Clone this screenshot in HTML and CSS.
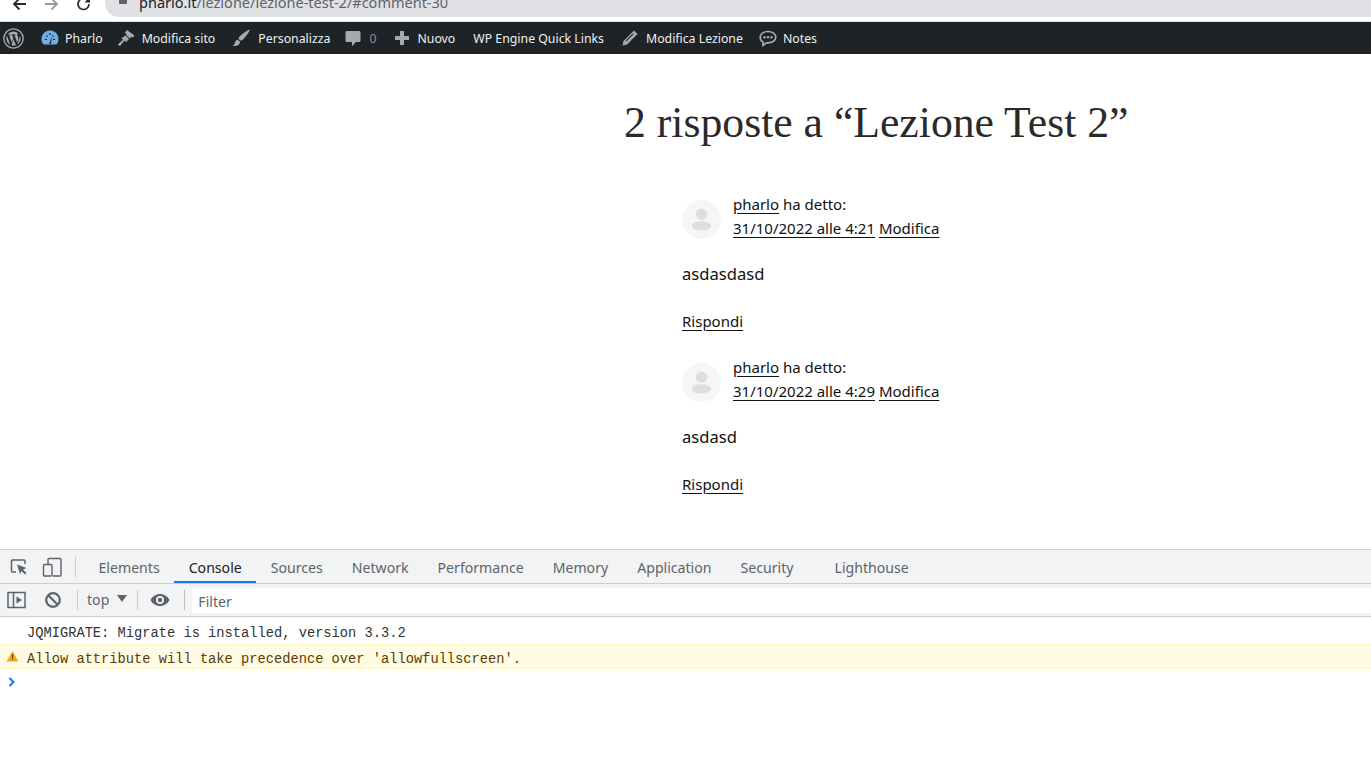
FILE: index.html
```html
<!DOCTYPE html>
<html lang="it">
<head>
<meta charset="utf-8">
<title>Lezione Test 2</title>
<link rel="stylesheet" href="styles.css">
</head>
<body>
<div class="browser">
  <svg class="nav nav-back" viewBox="0 0 16 16"><path d="M15 5H3M8.500-.5 3 5l5.500 5.500" fill="none" stroke="#2b2b2b" stroke-width="1.800"/></svg>
  <svg class="nav nav-fwd" viewBox="0 0 16 16"><path d="M1 5h12M7.500-.5 13 5l-5.500 5.500" fill="none" stroke="#9a9a9a" stroke-width="1.800"/></svg>
  <svg class="nav nav-rel" viewBox="0 0 16 16"><path d="M13 5a5.500 5.500 0 1 1-1.600-3.900" fill="none" stroke="#2b2b2b" stroke-width="1.700"/><path d="M14 -2v5.500H8.500z" fill="#2b2b2b"/></svg>
  <div class="url">
    <svg class="lock" viewBox="0 0 10 10"><rect x="1" y="0" width="8" height="7" rx="1" fill="#5f6368"/></svg>
    <span class="url-text"><span class="host">pharlo.it</span>/lezione/lezione-test-2/#comment-30</span>
  </div>
</div>
<nav class="adminbar">
  <svg class="ab-icon wp" viewBox="0 0 20 20"><circle cx="10" cy="10" r="9.200" fill="none" stroke="#a7aaad" stroke-width="1.300"/><path fill="#a7aaad" d="M3.200 10c0 2.700 1.600 5 3.800 6.100L3.700 7.200A6.800 6.800 0 0 0 3.200 10Zm11.400-.3c0-.8-.3-1.400-.6-1.900-.3-.6-.6-1-.6-1.500 0-.6.500-1.100 1.100-1.100h.1A6.800 6.800 0 0 0 4.300 6.300h.5c.7 0 1.800-.1 1.800-.1.400 0 .4.500.1.600 0 0-.4 0-.8.100l2.400 7.200 1.500-4.400-1-2.800-.7-.1c-.4 0-.3-.6 0-.6 0 0 1.100.1 1.800.1s1.800-.1 1.800-.1c.4 0 .4.500.1.600 0 0-.4 0-.8.100l2.400 7.100.7-2.200c.3-.9.500-1.600.5-2.100Zm-4.500 1L8.100 16.500a6.800 6.800 0 0 0 4.200-.1v-.1l-2.200-5.600Zm5.800-3.800.1.700c0 .7-.1 1.400-.5 2.400l-2 5.900a6.800 6.800 0 0 0 2.400-9Z"/></svg>
  <a class="ab-item ab-site"><svg class="ab-icon" viewBox="0 0 20 20"><path fill="#72aee6" d="M10 2.500a8.500 8.500 0 0 0-7 13.300c.3.400.7.700 1.200.7h11.600c.5 0 .9-.3 1.200-.7A8.500 8.500 0 0 0 10 2.500Z"/><path d="M5 11.500h2M10 5v2M13.500 7.500l-1 1M6.500 7.500l1 1M13 11.500h2" stroke="#1d2327" stroke-width="1.200"/><path d="M9.200 16 11.800 8.500 11 16z" fill="#1d2327"/></svg><span>Pharlo</span></a>
  <a class="ab-item ab-edit-site"><svg class="ab-icon" viewBox="0 0 20 20"><path fill="#a7aaad" d="M11 2 18.500 7.500l-1.500 2-1.500-.8-1.700 1.800-3.300-3-.2-1.800-1.600-1zM9.500 7.500l3.500 3.500-3 3-1.500-1.500-4.500 5.500L1.800 16.500 7 11.800 5.500 10.300z"/></svg><span>Modifica sito</span></a>
  <a class="ab-item ab-custom"><svg class="ab-icon" viewBox="0 0 20 20"><path fill="#a7aaad" d="M19 1.500c-1.500.4-8 4-10.500 7.300-.6.800-1 1.700-1 2.200l2.300 1.800c.6-.1 1.400-.6 2-1.200C15 8.800 18.500 3.200 19 1.500ZM6.800 11.800c-2.500.3-2.600 2.300-3 3.600-.3.900-1.200 1.800-2.300 2.300 3 .7 7.200.2 7.600-4z"/></svg><span>Personalizza</span></a>
  <a class="ab-item ab-comments"><svg class="ab-icon" viewBox="0 0 20 20"><path fill="#a7aaad" d="M4 3h12c1 0 1.500.6 1.500 1.500v8c0 1-.5 1.500-1.500 1.500h-3l-4 4.200V14H4c-1 0-1.500-.5-1.500-1.500v-8C2.500 3.600 3 3 4 3Z"/></svg><span class="count">0</span></a>
  <a class="ab-item ab-new"><svg class="ab-icon" viewBox="0 0 20 20"><path fill="#a7aaad" d="M8 3h4v5h5v4h-5v5H8v-5H3V8h5z"/></svg><span>Nuovo</span></a>
  <a class="ab-item ab-wpe"><span>WP Engine Quick Links</span></a>
  <a class="ab-item ab-edit"><svg class="ab-icon" viewBox="0 0 20 20"><path fill="#a7aaad" d="M14 2.500 17.500 6 7 16.500l-4.500 1 1-4.500zM12.800 5.500 5.500 12.800l.8.800 7.300-7.300z"/></svg><span>Modifica Lezione</span></a>
  <a class="ab-item ab-notes"><svg class="ab-icon" viewBox="0 0 20 20"><path fill="none" stroke="#a7aaad" stroke-width="1.700" d="M10 3.500c4.300 0 7.800 2.500 7.800 5.700s-3.500 5.700-7.800 5.700H8.500L5 17.300v-3.400C3.200 12.900 2.200 11.200 2.200 9.200 2.200 6 5.700 3.500 10 3.500Z"/><circle cx="6.500" cy="9.300" r="1.200" fill="#a7aaad"/><circle cx="10" cy="9.300" r="1.200" fill="#a7aaad"/><circle cx="13.500" cy="9.300" r="1.200" fill="#a7aaad"/></svg><span>Notes</span></a>
</nav>
<main class="page">
  <h2 class="comments-title">2 risposte a “Lezione Test 2”</h2>
  <ol class="comment-list">
    <li class="comment">
      <div class="comment-head">
        <svg class="avatar" viewBox="0 0 40 40"><circle cx="20" cy="20" r="20" fill="#f6f6f6"/><circle cx="20" cy="14.500" r="5.800" fill="#dedede"/><ellipse cx="20" cy="26.500" rx="10" ry="4.800" fill="#dedede"/></svg>
        <div class="meta">
          <div><a class="lnk">pharlo</a> ha detto:</div>
          <div><a class="lnk">31/10/2022 alle 4:21</a> <a class="lnk">Modifica</a></div>
        </div>
      </div>
      <p class="body">asdasdasd</p>
      <a class="lnk reply">Rispondi</a>
    </li>
    <li class="comment">
      <div class="comment-head">
        <svg class="avatar" viewBox="0 0 40 40"><circle cx="20" cy="20" r="20" fill="#f6f6f6"/><circle cx="20" cy="14.500" r="5.800" fill="#dedede"/><ellipse cx="20" cy="26.500" rx="10" ry="4.800" fill="#dedede"/></svg>
        <div class="meta">
          <div><a class="lnk">pharlo</a> ha detto:</div>
          <div><a class="lnk">31/10/2022 alle 4:29</a> <a class="lnk">Modifica</a></div>
        </div>
      </div>
      <p class="body">asdasd</p>
      <a class="lnk reply">Rispondi</a>
    </li>
  </ol>
</main>
<section class="devtools">
  <div class="dt-tabs">
    <svg class="dt-ic inspect" viewBox="0 0 18 18"><path d="M6 14H2.500a1 1 0 0 1-1-1V3a1 1 0 0 1 1-1H14a1 1 0 0 1 1 1v3" fill="none" stroke="#5f6368" stroke-width="1.500"/><path d="M7 6.500 16.500 10l-3.500 1.500 3.500 3.500-1.500 1.500-3.500-3.500L10 16z" fill="#5f6368"/></svg>
    <svg class="dt-ic device" viewBox="0 0 20 20"><path d="M6 7V2.500a1 1 0 0 1 1-1h11a1 1 0 0 1 1 1V18a1 1 0 0 1-1 1h-7" fill="none" stroke="#5f6368" stroke-width="1.400"/><rect x="1.500" y="7.500" width="8.500" height="11.500" rx="1" fill="none" stroke="#5f6368" stroke-width="1.400"/></svg>
    <span class="vsep"></span>
    <span class="tab t-elements">Elements</span>
    <span class="tab active">Console</span>
    <span class="tab">Sources</span>
    <span class="tab">Network</span>
    <span class="tab">Performance</span>
    <span class="tab">Memory</span>
    <span class="tab">Application</span>
    <span class="tab t-security">Security</span>
    <span class="tab">Lighthouse</span>
  </div>
  <div class="dt-toolbar">
    <svg class="tb-ic sidebar" viewBox="0 0 20 18"><rect x="1" y="1.500" width="17" height="15" fill="none" stroke="#5f6368" stroke-width="1.500"/><path d="M6.500 1.500v15" stroke="#5f6368" stroke-width="1.500"/><path d="M9.500 5.500 15 9l-5.500 3.500z" fill="#5f6368"/></svg>
    <svg class="tb-ic clear" viewBox="0 0 18 18"><circle cx="9" cy="9" r="6.800" fill="none" stroke="#5f6368" stroke-width="2.200"/><path d="m4.300 4.300 9.400 9.400" stroke="#5f6368" stroke-width="2.200"/></svg>
    <span class="vsep"></span>
    <span class="ctx">top</span>
    <span class="caret"></span>
    <span class="vsep sep-b"></span>
    <svg class="tb-ic eye" viewBox="0 0 20 14"><path fill="#5f6368" d="M10 1C5.700 1 2.300 3.500.5 7c1.800 3.500 5.200 6 9.500 6s7.700-2.500 9.500-6C17.700 3.500 14.300 1 10 1Zm0 10a4 4 0 1 1 0-8 4 4 0 0 1 0 8Zm0-6.300a2.300 2.300 0 1 0 0 4.600 2.300 2.300 0 0 0 0-4.600Z"/></svg>
    <span class="vsep sep-c"></span>
    <div class="filter">Filter</div>
  </div>
  <div class="console">
    <div class="msg">JQMIGRATE: Migrate is installed, version 3.3.2</div>
    <div class="msg warn"><svg class="warn-ic" viewBox="0 0 14 12"><path d="M7 .5 13.500 11.800H.5z" fill="#f2ab26"/><path d="M6.300 4h1.400v4.200H6.300zM6.300 9h1.400v1.400H6.300z" fill="#5b4300"/></svg>Allow attribute will take precedence over 'allowfullscreen'.</div>
    <svg class="prompt" viewBox="0 0 8 10"><path d="m1.500 1 4 4-4 4" fill="none" stroke="#1a73e8" stroke-width="2"/></svg>
  </div>
</section>
</body>
</html>
```
FILE: styles.css
```css
* { box-sizing: border-box; }
html, body { margin: 0; padding: 0; height: 770px; overflow: hidden; background: #fff; }
body { display: flex; flex-direction: column; font-family: "Noto Sans", "Open Sans", sans-serif; }
a { color: inherit; }

.browser { height: 22px; flex: none; display: flex; align-items: flex-start; padding-left: 11px; background: #fff; overflow: hidden; border-bottom: 1px solid #dadce0; }
.nav { width: 16px; height: 16px; flex: none; margin-top: -1px; }
.nav-fwd { margin-left: 17px; }
.nav-rel { margin-left: 16px; }
.url { margin-left: 13px; flex: 1; height: 17px; background: #dfe1e5; border-bottom-left-radius: 14px; display: flex; align-items: center; padding-left: 13px; position: relative; }
.lock { width: 10px; height: 10px; flex: none; margin-top: -14px; }
.url-text { margin-left: 11px; font-size: 14.500px; color: #5f6368; margin-top: -14px; white-space: nowrap; }
.host { color: #202124; }

.adminbar { height: 32px; flex: none; background: #1d2327; color: #f0f0f1; display: flex; align-items: center; font-size: 12.300px; padding-left: 3px; white-space: nowrap; }
.ab-icon { width: 20px; height: 20px; flex: none; }
.wp { width: 21px; height: 21px; }
.ab-item { display: flex; align-items: center; }
.ab-site { margin-left: 16px; }
.ab-site span { margin-left: 5px; }
.ab-edit-site { margin-left: 13px; }
.ab-edit-site span { margin-left: 6px; }
.ab-custom { margin-left: 16px; }
.ab-custom span { margin-left: 7px; }
.ab-comments { margin-left: 13px; }
.count { margin-left: 6px; color: #8c8f94; }
.ab-new { margin-left: 16px; }
.ab-new span { margin-left: 5px; }
.ab-wpe { margin-left: 18px; }
.ab-edit { margin-left: 16px; }
.ab-edit span { margin-left: 6px; }
.ab-notes { margin-left: 15px; }
.ab-notes span { margin-left: 5px; }

.page { height: 495px; flex: none; padding: 40px 0 0 624px; color: #111; }
.comments-title { margin: 0; font-family: "Liberation Serif", serif; font-weight: 400; font-size: 43.700px; line-height: 56px; color: #2a2a2a; white-space: nowrap; }
.comment-list { list-style: none; margin: 0; padding: 50px 0 0 58px; font-size: 15px; }
.comment { height: 163px; }
.comment-head { display: flex; align-items: flex-start; height: 48px; }
.avatar { width: 39px; height: 39px; flex: none; }
.meta { margin: -8px 0 0 12px; line-height: 24px; }
.lnk { text-decoration: underline; text-underline-offset: 3px; }
.body { margin: 13px 0 0; font-size: 16.600px; line-height: 26px; }
.reply { display: block; margin-top: 22px; line-height: 24px; width: fit-content; }

.devtools { flex: 1; display: flex; flex-direction: column; min-height: 0; color: #5f6368; }
.dt-tabs { height: 35px; flex: none; background: #f1f3f4; border-top: 1px solid #cbcdd1; border-bottom: 1px solid #cbcdd1; display: flex; align-items: center; padding-left: 10px; font-size: 14.120px; }
.dt-ic { flex: none; }
.inspect { width: 18px; height: 18px; }
.device { width: 20px; height: 20px; margin-left: 14px; }
.vsep { width: 1px; height: 20px; background: #ccc; flex: none; margin-left: 13px; }
.tab { height: 33px; line-height: 35px; padding: 0 14.500px; flex: none; }
.t-elements { margin-left: 8px; }
.tab.active { color: #202124; position: relative; }
.tab.active::after { content: ""; position: absolute; left: 0; right: 0; bottom: 0; height: 2px; background: #1a73e8; }
.t-security { margin-right: 12px; }
.dt-toolbar { height: 33px; flex: none; background: #f1f3f4; border-bottom: 1px solid #cbcdd1; display: flex; align-items: center; padding-left: 7px; font-size: 14.120px; }
.sidebar { width: 20px; height: 18px; }
.clear { width: 18px; height: 18px; margin-left: 17px; }
.dt-toolbar .vsep { margin-left: 15px; }
.ctx { margin-left: 9px; line-height: 28px; }
.caret { width: 0; height: 0; border: 5px solid transparent; border-top: 7px solid #5f6368; border-bottom: 0; margin-left: 8px; margin-top: -3px; }
.dt-toolbar .sep-b { margin-left: 10px; }
.eye { width: 20px; height: 14px; margin-left: 12px; }
.dt-toolbar .sep-c { margin-left: 14px; background: #bbb; }
.filter { margin-left: 7px; flex: 1; height: 25px; line-height: 28px; background: #fff; padding-left: 6px; }
.console { flex: 1; background: #fff; font-family: "Liberation Mono", "DejaVu Sans Mono", monospace; font-size: 13.730px; color: #333; }
.msg { height: 27px; line-height: 34px; padding-left: 27px; position: relative; white-space: nowrap; }
.warn { height: 25px; line-height: 30px; background: #fffbe5; border-top: 1px solid #fff5c2; border-bottom: 1px solid #fff5c2; color: #5c3c00; }
.warn-ic { position: absolute; left: 6px; top: 5px; width: 13px; height: 12px; }
.prompt { display: block; width: 8px; height: 10px; margin: 8px 0 0 8px; }
```
